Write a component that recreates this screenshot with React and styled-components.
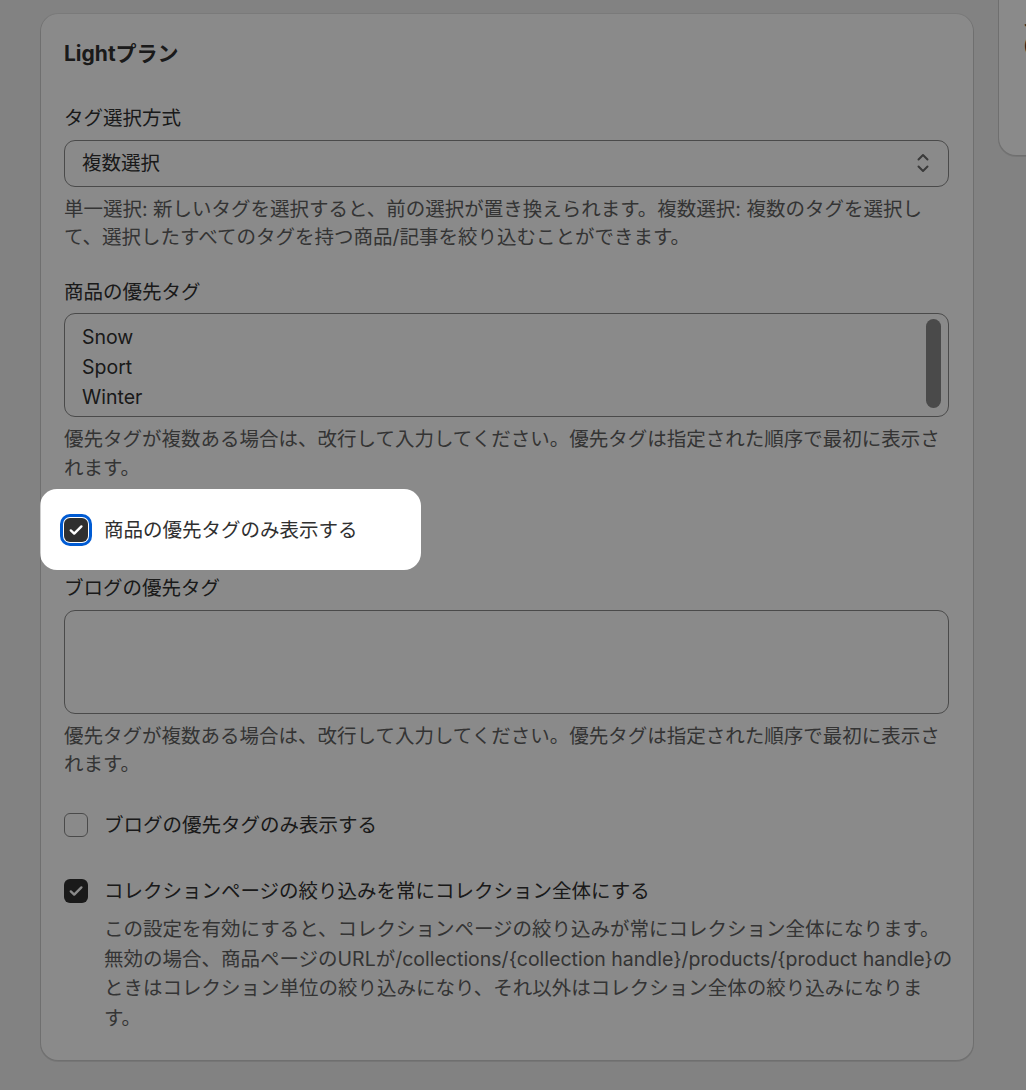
import React from 'react';
import styled, { createGlobalStyle } from 'styled-components';

const GlobalStyle = createGlobalStyle`
  html {
    overflow: hidden;
  }
  body {
    margin: 0;
    background: #f1f1f1;
    color: #303030;
    font-family: Inter, "Noto Sans CJK JP", sans-serif;
    font-size: 19.5px;
    line-height: 28.6px;
  }
`;

const Page = styled.div`
  display: flex;
  align-items: flex-start;
  gap: 26px;
  min-height: 100vh;
  padding-left: 41px;
`;

const Card = styled.section`
  flex: 0 0 auto;
  width: 932px;
  min-width: 0;
  box-sizing: border-box;
  margin-top: 14px;
  padding: 26px 24px 27px 23px;
  background: #fff;
  border-radius: 17px;
  box-shadow: 0 0 0 1px rgba(0, 0, 0, 0.06), 0 1px 0 1px rgba(0, 0, 0, 0.09);
`;

const SideCard = styled.aside`
  flex: 0 0 320px;
  box-sizing: border-box;
  height: 155px;
  padding: 6px 24px;
  background: #fff;
  border-radius: 0 0 17px 17px;
  box-shadow: 0 0 0 1px rgba(0, 0, 0, 0.06), 0 1px 0 1px rgba(0, 0, 0, 0.09);
  line-height: 27px;
`;

const SideTitle = styled.div`
  font-weight: 700;
`;

const Title = styled.h2`
  margin: 0;
  font-size: 21px;
  font-weight: 700;
  line-height: 27px;
`;

const Block = styled.div`
  margin-top: ${(p) => p.$space}px;
`;

const Label = styled.div`
  margin-bottom: 7px;
`;

// help copy keeps its own line breaks
const Help = styled.div`
  margin-top: 8px;
  color: #616161;
  white-space: nowrap;
`;

const SelectBox = styled.div`
  display: flex;
  align-items: center;
  justify-content: space-between;
  box-sizing: border-box;
  height: 47px;
  padding: 0 19px 0 17px;
  border: 1px solid #8a8a8a;
  border-radius: 11px;
`;

const TextBox = styled.div`
  position: relative;
  box-sizing: border-box;
  height: 104px;
  padding: 8px 17px 4px;
  border: 1px solid #8a8a8a;
  border-radius: 11px;
  line-height: 30px;
  white-space: pre;
  overflow: hidden;
`;

// overlay scrollbar thumb drawn over the text box
const Thumb = styled.span`
  position: absolute;
  top: 5px;
  right: 7px;
  bottom: 8px;
  width: 15px;
  border-radius: 8px;
  background: #898989;
`;

const CheckRow = styled.div`
  display: flex;
  align-items: flex-start;
  gap: 16px;
`;

const Box = styled.span`
  flex: 0 0 auto;
  display: flex;
  align-items: center;
  justify-content: center;
  box-sizing: border-box;
  width: 24px;
  height: 24px;
  margin-top: 2px;
  border-radius: 6px;
  background: ${(p) => (p.$checked ? '#303030' : '#fff')};
  border: ${(p) => (p.$checked ? 'none' : '1px solid #8a8a8a')};
  box-shadow: ${(p) => (p.$focused ? '0 0 0 1px #fff, 0 0 0 4px #005bd3' : 'none')};
`;

const CheckText = styled.div`
  display: flex;
  flex-direction: column;
`;

const Description = styled.div`
  margin-top: 10px;
  color: #616161;
  line-height: 29.5px;
  white-space: nowrap;
`;

// dims the whole page except the rounded area around the wrapped item
const Spotlight = styled.div`
  position: relative;
  width: fit-content;
  &::after {
    content: '';
    position: absolute;
    inset: -27px -63px -26px -24px;
    border-radius: 17px;
    box-shadow: 0 0 0 3000px rgba(0, 0, 0, 0.46);
    pointer-events: none;
    z-index: 10;
  }
`;

const Chevrons = () => (
  <svg width="12" height="20" viewBox="0 0 12 20" fill="none" stroke="#6b6b6b" strokeWidth="2" strokeLinecap="round" strokeLinejoin="round">
    <path d="M1.5 6.5 6 2l4.5 4.5M1.5 13.5 6 18l4.5-4.5" />
  </svg>
);

const Checkbox = ({ checked, focused }) => (
  <Box $checked={checked} $focused={focused}>
    {checked && (
      <svg width="24" height="24" viewBox="0 0 24 24" fill="none" stroke="#fff" strokeWidth="2.4" strokeLinecap="round" strokeLinejoin="round">
        <path d="M6.8 12.4 10.2 15.6 17.4 8.4" />
      </svg>
    )}
  </Box>
);

const Lines = ({ lines }) =>
  lines.map((line, i) => (
    <React.Fragment key={i}>
      {i > 0 && <br />}
      {line}
    </React.Fragment>
  ));

const MODE_HELP = [
  '単一選択: 新しいタグを選択すると、前の選択が置き換えられます。複数選択: 複数のタグを選択し',
  'て、選択したすべてのタグを持つ商品/記事を絞り込むことができます。',
];

const TAG_HELP = [
  '優先タグが複数ある場合は、改行して入力してください。優先タグは指定された順序で最初に表示さ',
  'れます。',
];

const COLLECTION_HELP = [
  'この設定を有効にすると、コレクションページの絞り込みが常にコレクション全体になります。',
  '無効の場合、商品ページのURLが/collections/{collection handle}/products/{product handle}の',
  'ときはコレクション単位の絞り込みになり、それ以外はコレクション全体の絞り込みになりま',
  'す。',
];

export default function App() {
  return (
    <>
      <GlobalStyle />
      <Page>
        <Card>
          <Title>Lightプラン</Title>

          <Block $space={37}>
            <Label>タグ選択方式</Label>
            <SelectBox>
              <span>複数選択</span>
              <Chevrons />
            </SelectBox>
            <Help>
              <Lines lines={MODE_HELP} />
            </Help>
          </Block>

          <Block $space={26}>
            <Label>商品の優先タグ</Label>
            <TextBox>
              {'Snow\nSport\nWinter'}
              <Thumb />
            </TextBox>
            <Help>
              <Lines lines={TAG_HELP} />
            </Help>
          </Block>

          <Block $space={33}>
            <Spotlight>
              <CheckRow>
                <Checkbox checked focused />
                <span>商品の優先タグのみ表示する</span>
              </CheckRow>
            </Spotlight>
          </Block>

          <Block $space={30}>
            <Label>ブログの優先タグ</Label>
            <TextBox />
            <Help>
              <Lines lines={TAG_HELP} />
            </Help>
          </Block>

          <Block $space={32}>
            <CheckRow>
              <Checkbox />
              <span>ブログの優先タグのみ表示する</span>
            </CheckRow>
          </Block>

          <Block $space={37}>
            <CheckRow>
              <Checkbox checked />
              <CheckText>
                <span>コレクションページの絞り込みを常にコレクション全体にする</span>
                <Description>
                  <Lines lines={COLLECTION_HELP} />
                </Description>
              </CheckText>
            </CheckRow>
          </Block>
        </Card>

        <SideCard>
          <SideTitle>ステータス</SideTitle>
          <div>(Light)</div>
        </SideCard>
      </Page>
    </>
  );
}
